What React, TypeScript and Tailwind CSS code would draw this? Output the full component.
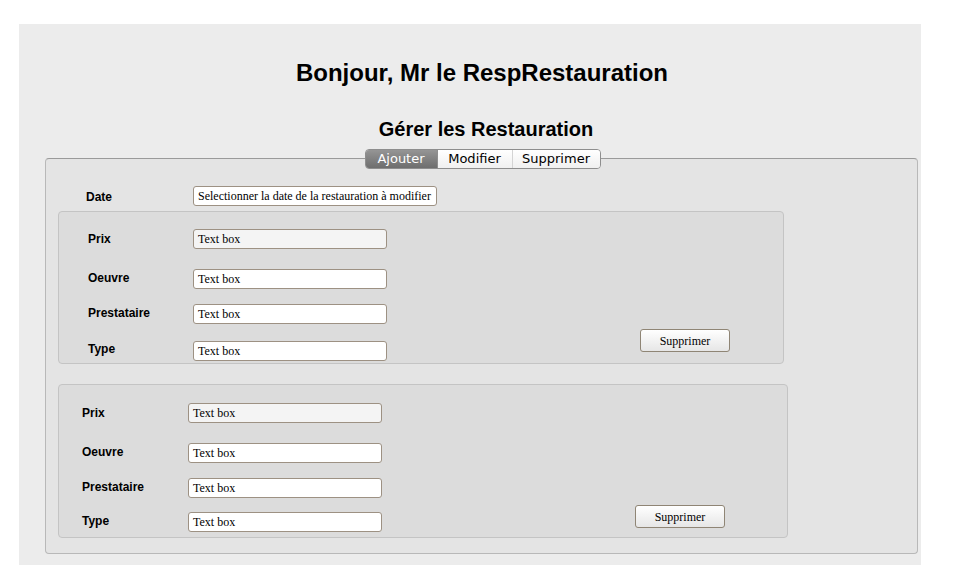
type Field = {
  label: string
  gray?: boolean
  gap: string
  lift?: string
}

const FIELDS_A: Field[] = [
  { label: 'Prix', gray: true, gap: 'mt-0' },
  { label: 'Oeuvre', gap: 'mt-[20px]', lift: 'pb-[2px]' },
  { label: 'Prestataire', gap: 'mt-[15px]', lift: 'pb-[2px]' },
  { label: 'Type', gap: 'mt-[16px]', lift: 'pb-[4px]' },
]

const FIELDS_B: Field[] = [
  { label: 'Prix', gray: true, gap: 'mt-0' },
  { label: 'Oeuvre', gap: 'mt-[20px]', lift: 'pb-[2px]' },
  { label: 'Prestataire', gap: 'mt-[15px]', lift: 'pb-[2px]' },
  { label: 'Type', gap: 'mt-[14px]', lift: 'pb-[2px]' },
]

function TextBox({ value, gray, width }: { value: string; gray?: boolean; width: string }) {
  return (
    <div
      className={`${width} flex h-[20px] items-center rounded-[3px] border border-[#9d9183] px-[4px] font-['Liberation_Serif',serif] text-[12px] text-black ${
        gray ? 'bg-[#f4f4f4]' : 'bg-white'
      }`}
    >
      {value}
    </div>
  )
}

function SupprimerButton({ className }: { className: string }) {
  return (
    <button
      type="button"
      className={`${className} flex h-[23px] w-[90px] items-center justify-center rounded-[3px] border border-[#8f8575] bg-gradient-to-b from-white to-[#e6e6e6] font-['Liberation_Serif',serif] text-[12px] text-black`}
    >
      Supprimer
    </button>
  )
}

function RestaurationBox({
  fields,
  boxClass,
  labelWidth,
  buttonClass,
}: {
  fields: Field[]
  boxClass: string
  labelWidth: string
  buttonClass: string
}) {
  return (
    <div className={`${boxClass} flex rounded-[4px] border border-[#c4c4c4] bg-[#dcdcdc]`}>
      <div className="flex flex-col">
        {fields.map((field) => (
          <div key={field.label} className={`${field.gap} flex items-center`}>
            <span
              className={`${labelWidth} ${field.lift ?? ''} font-['Liberation_Sans',Arial,sans-serif] text-[12px] font-bold text-black`}
            >
              {field.label}
            </span>
            <TextBox value="Text box" gray={field.gray} width="w-[194px]" />
          </div>
        ))}
      </div>
      <SupprimerButton className={buttonClass} />
    </div>
  )
}

export default function App() {
  return (
    <main className="min-h-[575px] bg-white pt-[24px]">
      <div className="ml-[19px] h-[541px] w-[902px] bg-[#ececec] pt-[35px] font-['Liberation_Sans',Arial,sans-serif]">
        <h1 className="pl-[24px] text-center text-[24px] font-bold leading-[28px] text-black">
          Bonjour, Mr le RespRestauration
        </h1>
        <h2 className="mt-[30px] pl-[32px] text-center text-[20px] font-bold leading-[24px] text-black">
          Gérer les Restauration
        </h2>

        <div className="ml-[26px] mt-[8px] w-[873px]">
          <div className="relative z-10 flex justify-center pl-[2px]">
            <div className="flex h-[20px] overflow-hidden rounded-[4px] border border-[#8e8e8e] font-['DejaVu_Sans',sans-serif] text-[13px] leading-[18px]">
              <span className="w-[71px] bg-gradient-to-b from-[#959595] to-[#6e6e6e] text-center text-white">Ajouter</span>
              <span className="w-[75px] border-l border-[#8e8e8e] bg-gradient-to-b from-white to-[#f0f0f0] text-center text-black">
                Modifier
              </span>
              <span className="w-[88px] border-l border-[#d4d4d4] bg-gradient-to-b from-white to-[#f0f0f0] text-center text-black">
                Supprimer
              </span>
            </div>
          </div>

          <div className="-mt-[11px] h-[396px] rounded-[4px] border border-[#b8b8b8] border-t-[#9a9a9a] bg-[#e4e4e4] pt-[27px]">
            <div className="flex items-center">
              <span className="ml-[40px] w-[107px] pt-[1px] text-[12px] font-bold text-black">Date</span>
              <TextBox value="Selectionner la date de la restauration à modifier" width="w-[244px]" />
            </div>

            <RestaurationBox
              fields={FIELDS_A}
              boxClass="ml-[12px] mt-[5px] h-[153px] w-[726px] pl-[29px] pt-[17px]"
              labelWidth="w-[105px]"
              buttonClass="ml-[253px] mt-[100px]"
            />

            <RestaurationBox
              fields={FIELDS_B}
              boxClass="ml-[12px] mt-[20px] h-[154px] w-[730px] pl-[23px] pt-[18px]"
              labelWidth="w-[106px]"
              buttonClass="ml-[253px] mt-[102px]"
            />
          </div>
        </div>
      </div>
    </main>
  )
}
